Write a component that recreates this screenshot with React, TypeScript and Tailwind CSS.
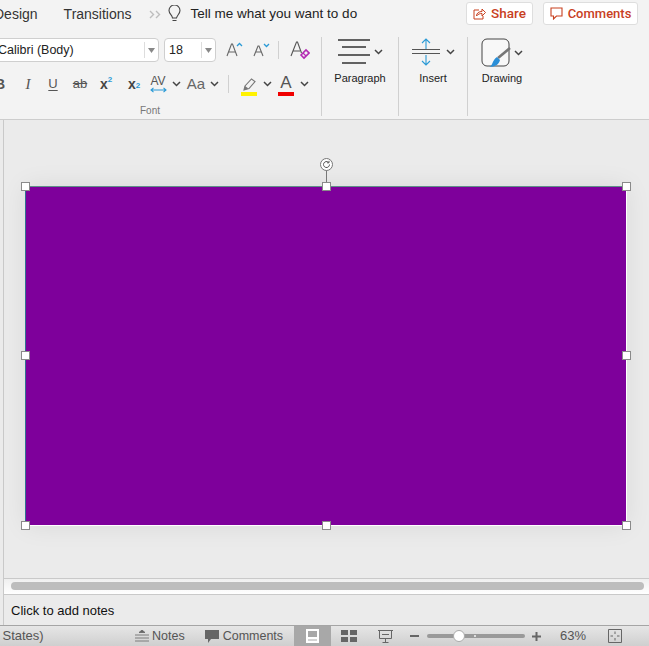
import type { ReactNode } from "react";

function Chevron({ className = "" }: { className?: string }) {
  return (
    <svg width="9" height="6" viewBox="0 0 9 6" className={className}>
      <path d="M1 1l3.5 3.5L8 1" fill="none" stroke="#444" strokeWidth="1.5" />
    </svg>
  );
}

function Sep({ className = "" }: { className?: string }) {
  return <div className={`w-px bg-[#d0d0d0] ${className}`} />;
}

function Handle({ className }: { className: string }) {
  return <div className={`absolute h-[9px] w-[9px] border border-[#8a8a8a] bg-white ${className}`} />;
}

function Cell({ className = "", children }: { className?: string; children: ReactNode }) {
  return <div className={`flex h-6 shrink-0 items-center justify-center ${className}`}>{children}</div>;
}

function FontRows() {
  return (
    <div className="flex w-[321px] shrink-0 flex-col">
      <div className="ml-[-5px] mt-[8px] flex h-6 items-center">
        <div className="flex h-6 w-[164px] items-center rounded border border-[#cfcfcf] bg-white">
          <span className="flex-1 pl-[2px] text-[12.5px] text-[#222]">Calibri (Body)</span>
          <span className="flex h-4 w-[14px] items-center justify-center border-l border-[#ddd]">
            <svg width="7" height="5" viewBox="0 0 7 5"><path d="M0 0h7L3.5 5z" fill="#888" /></svg>
          </span>
        </div>
        <div className="ml-[5px] flex h-6 w-[52px] items-center rounded border border-[#cfcfcf] bg-white">
          <span className="flex-1 pl-[4px] text-[12.5px] text-[#222]">18</span>
          <span className="flex h-4 w-[14px] items-center justify-center border-l border-[#ddd]">
            <svg width="7" height="5" viewBox="0 0 7 5"><path d="M0 0h7L3.5 5z" fill="#888" /></svg>
          </span>
        </div>
        <svg width="18" height="16" viewBox="0 0 18 16" className="ml-[10px]">
          <path d="M1 14L5.500 2h1L11 14M3 10h6" fill="none" stroke="#666" strokeWidth="1.1" />
          <path d="M11 4l2.500-2.500L16 4" fill="none" stroke="#2a9ad6" strokeWidth="1.3" />
        </svg>
        <svg width="18" height="16" viewBox="0 0 18 16" className="ml-[9px]">
          <path d="M1 14L5 4h1l4 10M2.700 10h6" fill="none" stroke="#666" strokeWidth="1.1" />
          <path d="M11 2l2.500 2.500L16 2" fill="none" stroke="#2a9ad6" strokeWidth="1.3" />
        </svg>
        <Sep className="ml-[7px] h-[18px]" />
        <svg width="20" height="20" viewBox="0 0 20 20" className="ml-[11px]">
          <path d="M1 16L6.500 2h1l4 11M3 11h7" fill="none" stroke="#555" strokeWidth="1.1" />
          <path d="M11 15l5-5 3 3-5 5z" fill="none" stroke="#b42ab4" strokeWidth="1.6" />
          <path d="M13 13l3 3" stroke="#b42ab4" strokeWidth="1.2" />
        </svg>
      </div>
      <div className="ml-[-10px] mt-[10px] flex h-6 items-center text-[#555]">
        <Cell className="w-5 text-[14px] font-bold">B</Cell>
        <Cell className="ml-[8px] w-5 font-['Liberation_Serif'] text-[15px] italic">I</Cell>
        <Cell className="ml-[5px] w-5 text-[13px] underline underline-offset-2">U</Cell>
        <Cell className="ml-[7px] w-5 text-[13px] line-through">ab</Cell>
        <Cell className="ml-[6px] w-5 text-[14px] font-bold text-[#444]">
          x<sup className="text-[8px] text-[#2a9ad6]">2</sup>
        </Cell>
        <Cell className="ml-[8px] w-5 text-[14px] font-bold text-[#444]">
          x<sub className="text-[8px] text-[#2a9ad6]">2</sub>
        </Cell>
        <Cell className="ml-[4px] w-5">
          <span className="relative flex flex-col items-center text-[12px] leading-[12px]">
            AV
            <svg width="17" height="6" viewBox="0 0 17 6">
              <path d="M1 3h15M3.500 .8L1 3l2.500 2.200M13.500 .8L16 3l-2.500 2.200" fill="none" stroke="#2a9ad6" strokeWidth="1.1" />
            </svg>
          </span>
        </Cell>
        <Chevron className="ml-[4px]" />
        <Cell className="ml-[5px] w-5 text-[15px] text-[#666]">Aa</Cell>
        <Chevron className="ml-[4px]" />
        <Sep className="ml-[9px] h-[18px]" />
        <div className="ml-[12px] flex h-6 w-4 flex-col items-center justify-end">
          <svg width="15" height="13" viewBox="0 0 15 13">
            <path d="M2 12l1-4 6.500-7 3.500 2.500-6 7z" fill="none" stroke="#777" strokeWidth="1.1" />
            <path d="M2 12l1-4 3.500 2.500z" fill="#777" />
          </svg>
          <div className="mt-[1px] h-1 w-4 bg-[#fff200]" />
        </div>
        <Chevron className="ml-[6px]" />
        <div className="ml-[6px] flex h-6 w-4 flex-col items-center justify-end">
          <span className="text-[17px] leading-[16px]">A</span>
          <div className="mt-[1px] h-1 w-4 bg-[#f00000]" />
        </div>
        <Chevron className="ml-[6px]" />
      </div>
      <div className="ml-[-21px] mt-[9px] text-center text-[10px] leading-3 text-[#777]">Font</div>
    </div>
  );
}

function Ribbon() {
  return (
    <div className="flex h-[90px] shrink-0 border-b border-[#cdcdcd] bg-[#f3f3f3]">
      <FontRows />
      <Sep className="mt-[7px] h-[79px]" />
      <div className="flex w-[76px] shrink-0 flex-col items-center pt-[8px]">
        <div className="flex items-center">
          <svg width="34" height="28" viewBox="0 0 34 28">
            <path d="M1 2h32M5 9h24M1 17h32M5 25h24" stroke="#333" strokeWidth="1.6" />
          </svg>
          <Chevron className="ml-[3px]" />
        </div>
        <span className="mt-[5px] text-[11px] leading-[14px] text-[#222]">Paragraph</span>
      </div>
      <Sep className="mt-[7px] h-[79px]" />
      <div className="flex w-[68px] shrink-0 flex-col items-center pt-[8px]">
        <div className="flex items-center">
          <svg width="28" height="28" viewBox="0 0 28 28">
            <path d="M14 1v10M10 5l4-4 4 4M14 27V17M10 23l4 4 4-4" fill="none" stroke="#2a9ad6" strokeWidth="1.1" />
            <path d="M0 11.500h28M0 15.500h28" stroke="#555" strokeWidth="1" />
          </svg>
          <Chevron className="ml-[6px]" />
        </div>
        <span className="mt-[5px] text-[11px] leading-[14px] text-[#222]">Insert</span>
      </div>
      <Sep className="mt-[7px] h-[79px]" />
      <div className="ml-[13px] flex shrink-0 flex-col items-center pt-[8px]">
        <div className="flex items-center">
          <svg width="30" height="30" viewBox="0 0 30 30">
            <rect x="1" y="1" width="27" height="27" rx="5" fill="#f8f8f8" stroke="#444" strokeWidth="1" />
            <path d="M17 20L29 10" stroke="#777" strokeWidth="2.600" />
            <path d="M8 29c4-1 3-7 8-10l3 3c-1 4-4 7-11 7z" fill="#2a8fd8" />
          </svg>
          <Chevron className="ml-[3px]" />
        </div>
        <span className="mt-[3px] text-[11px] leading-[14px] text-[#222]">Drawing</span>
      </div>
    </div>
  );
}

function TopBar() {
  return (
    <div className="flex h-[30px] shrink-0 items-center bg-[#f3f3f3]">
      <span className="mb-[2px] ml-[-6px] text-[14px] text-[#333]">Design</span>
      <span className="mb-[2px] ml-[26px] text-[14px] text-[#333]">Transitions</span>
      <svg width="12" height="9" viewBox="0 0 12 9" className="mb-[2px] ml-[17px]">
        <path d="M1 1l3.500 3.500L1 8M7 1l3.500 3.500L7 8" fill="none" stroke="#bdbdbd" strokeWidth="1.4" />
      </svg>
      <svg width="13" height="18" viewBox="0 0 13 18" className="mb-[3px] ml-[7px]">
        <path d="M4.500 13c0-3-3.500-4-3.500-7.500a5.500 5.500 0 0 1 11 0C12 9 9 10 8.500 13zM4.500 15.500h4" fill="none" stroke="#444" strokeWidth="1.1" />
      </svg>
      <span className="mb-[2px] ml-[10px] text-[13.5px] text-[#222]">Tell me what you want to do</span>
      <div className="mb-[3px] ml-auto mr-[11px] flex gap-[10px]">
        <div className="flex h-[23px] w-[67px] items-center justify-center gap-[5px] rounded-[3px] border border-[#dedede] bg-white font-['Roboto',sans-serif] text-[13.5px] font-medium text-[#c8401f]">
          <svg width="13" height="12" viewBox="0 0 13 12">
            <path d="M6 2H1v9h9V8M3.500 8c0-3 2.500-4.500 5.500-4.500V1l3.500 3.500L9 8V5.500c-2 0-4 .5-5.500 2.500z" fill="none" stroke="#c8401f" strokeWidth="1" />
          </svg>
          Share
        </div>
        <div className="flex h-[23px] w-[95px] items-center justify-center gap-[5px] rounded-[3px] border border-[#dedede] bg-white font-['Roboto',sans-serif] text-[13px] font-medium text-[#c8401f]">
          <svg width="13" height="13" viewBox="0 0 13 13">
            <path d="M1 1h11v8H6.500L3.500 12V9H1z" fill="none" stroke="#c8401f" strokeWidth="1.1" />
          </svg>
          Comments
        </div>
      </div>
    </div>
  );
}

function Stage() {
  return (
    <div className="ml-[3px] flex h-[458px] shrink-0 flex-col border-l border-[#c9c9c9] bg-[#ebebeb] pl-[21px] pt-[66px]">
      <div className="relative h-[340px] w-[602px] border border-t-[#5f8f88] border-b-white border-l-[#2f7190] border-r-white bg-[#7e009b] shadow-[0_0_24px_rgba(0,0,0,0.08)]">
        <div className="absolute left-[300px] top-[-22px] h-[22px] w-px bg-[#777]" />
        <div className="absolute left-[294px] top-[-29px] flex h-[13px] w-[13px] items-center justify-center rounded-full border border-[#777] bg-white">
          <svg width="9" height="9" viewBox="0 0 9 9">
            <path d="M7.500 4.500a3 3 0 1 1-1-2.200M7 .8v2H5" fill="none" stroke="#555" strokeWidth="1" />
          </svg>
        </div>
        <Handle className="left-[-5px] top-[-5px]" />
        <Handle className="left-[296px] top-[-5px]" />
        <Handle className="right-[-5px] top-[-5px]" />
        <Handle className="left-[-5px] top-[164px]" />
        <Handle className="right-[-5px] top-[164px]" />
        <Handle className="bottom-[-5px] left-[-5px]" />
        <Handle className="bottom-[-5px] left-[296px]" />
        <Handle className="bottom-[-5px] right-[-5px]" />
      </div>
    </div>
  );
}

function StatusBar() {
  return (
    <div className="flex h-[21px] shrink-0 items-center border-t border-[#a5a5a5] bg-gradient-to-b from-[#e6e6e6] to-[#cfcfcf] text-[12.5px] text-[#555]">
      <span className="ml-[-4px] w-[139px] shrink-0 text-[13px]">l States)</span>
      <svg width="14" height="12" viewBox="0 0 14 12">
        <path d="M7 0l3 2.500H4zM0 5h14M0 8h14M0 11h14" fill="#666" stroke="#666" strokeWidth=".8" />
      </svg>
      <span className="ml-[3px]">Notes</span>
      <svg width="14" height="13" viewBox="0 0 14 13" className="ml-[20px]">
        <path d="M0 0h14v9H6l-3 4V9H0z" fill="#666" />
      </svg>
      <span className="ml-[4px]">Comments</span>
      <div className="ml-[11px] flex h-full w-[37px] items-center justify-center bg-[#a8a8a8]">
        <svg width="13" height="14" viewBox="0 0 13 14">
          <rect x="0" y="0" width="13" height="14" fill="white" />
          <path d="M2 2h9v6H2z" fill="#a8a8a8" />
          <path d="M2 11h9" stroke="#a8a8a8" />
        </svg>
      </div>
      <svg width="16" height="12" viewBox="0 0 16 12" className="ml-[10px]">
        <path d="M0 0h7v5H0zM9 0h7v5H9zM0 7h7v5H0zM9 7h7v5H9z" fill="#666" />
      </svg>
      <svg width="15" height="13" viewBox="0 0 15 13" className="ml-[21px]">
        <path d="M0 .5h15M1.500 .5v8h12v-8M7.500 8.500V12M4.500 12.500h6M4 4.500h7" fill="none" stroke="#666" strokeWidth="1" />
      </svg>
      <div className="ml-[17px] h-[2px] w-[9px] bg-[#666]" />
      <div className="relative ml-[8px] h-1 w-[98px] rounded-full bg-[#999]">
        <div className="absolute left-[47px] top-[1px] h-[2px] w-[2px] bg-[#ddd]" />
        <div className="absolute left-[26px] top-[-4px] h-3 w-3 rounded-full border border-[#aaa] bg-white" />
      </div>
      <svg width="9" height="9" viewBox="0 0 9 9" className="ml-[7px]">
        <path d="M0 4.500h9M4.500 0v9" stroke="#666" strokeWidth="2" />
      </svg>
      <span className="ml-[19px] w-[25px] text-[13px]">63%</span>
      <svg width="14" height="14" viewBox="0 0 14 14" className="ml-[23px]">
        <path d="M.5 .5h13v13H.5zM7 2.500v2.500M7 9v2.500M2.500 7H5M9 7h2.500" fill="none" stroke="#666" strokeWidth="1" />
      </svg>
    </div>
  );
}

export default function App() {
  return (
    <div className="flex h-[646px] w-[649px] flex-col overflow-hidden bg-[#ebebeb] font-['Liberation_Sans',sans-serif]">
      <TopBar />
      <Ribbon />
      <Stage />
      <div className="ml-[3px] flex h-[16px] shrink-0 flex-col border-l border-t border-[#c9c9c9] bg-gradient-to-b from-[#efefef] to-white pl-[7px] pr-[5px] pt-[3px]">
        <div className="h-2 rounded-full bg-[#bdbdbd]" />
      </div>
      <div className="ml-[3px] flex h-[31px] shrink-0 items-center border-l border-t border-[#c9c9c9] bg-[#ebebeb] pl-[7px] pt-[2px] text-[13px] text-[#111]">
        Click to add notes
      </div>
      <StatusBar />
    </div>
  );
}
